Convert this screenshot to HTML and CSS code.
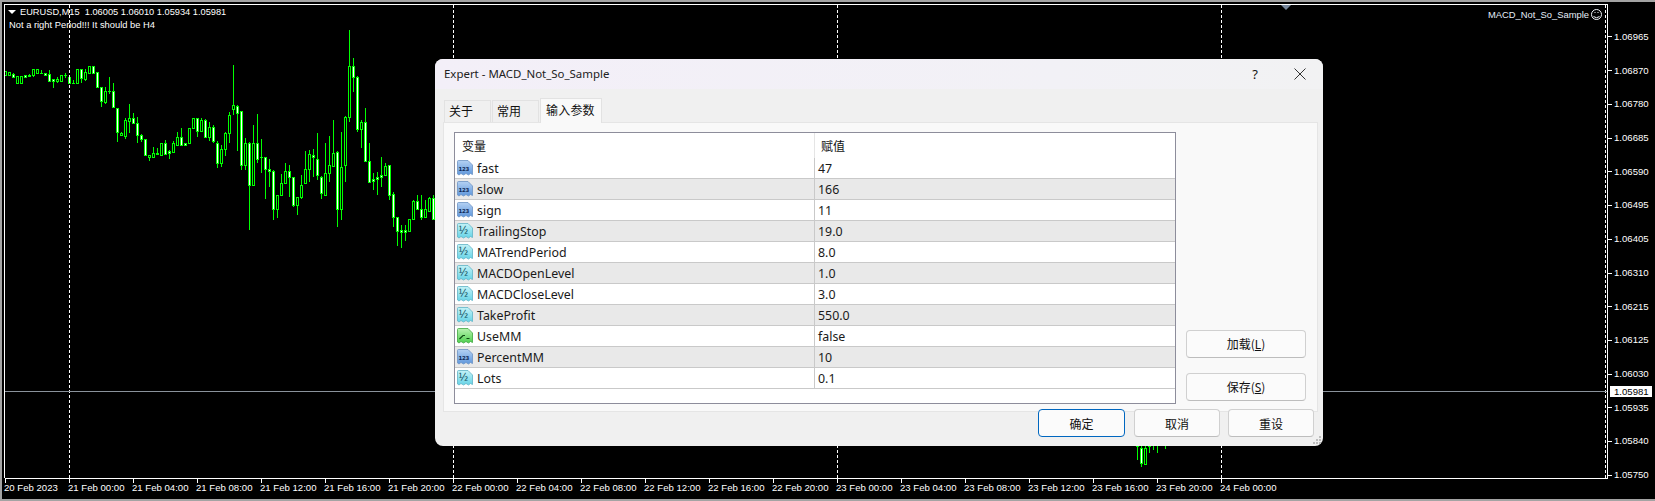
FILE: index.html
```html
<!DOCTYPE html>
<html lang="zh">
<head>
<meta charset="utf-8">
<title>MetaTrader Expert</title>
<link rel="stylesheet" href="styles.css">
</head>
<body>
<div class="screen">
  <svg class="canvas" width="1655" height="501" viewBox="0 0 1655 501">
    <g id="candles"></g>
    <path class="dash" d="M69.5 5V478M453.5 5V478M837.5 5V478M1221.5 5V478M1605.5 5V478"/>
    <path class="price-line" d="M5 391.5H1607"/>
    <path class="frame" d="M4.5 478V4.5H1607.5V478.5H4.5"/>
    <path class="frame" d="M5.5 479V483M69.5 479V483M133.5 479V483M197.5 479V483M261.5 479V483M325.5 479V483M389.5 479V483M453.5 479V483M517.5 479V483M581.5 479V483M645.5 479V483M709.5 479V483M773.5 479V483M837.5 479V483M901.5 479V483M965.5 479V483M1029.5 479V483M1093.5 479V483M1157.5 479V483M1221.5 479V483"/>
    <path class="frame" d="M1608 36.5H1612M1608 70.5H1612M1608 104.5H1612M1608 138.5H1612M1608 171.5H1612M1608 205.5H1612M1608 239.5H1612M1608 273.5H1612M1608 306.5H1612M1608 340.5H1612M1608 374.5H1612M1608 407.5H1612M1608 441.5H1612M1608 475.5H1612"/>
    <path class="marker" d="M1281 5H1291L1286 10Z"/>
    <circle class="smile" cx="1596.5" cy="14.5" r="5"/>
    <path class="smile" d="M1593.5 16.5Q1596.5 19 1599.5 16.5M1594.5 12.5H1595.5M1597.5 12.5H1598.5"/>
    <path class="menu-arrow" d="M8 10H16L12 14Z"/>
  </svg>

  <div class="chart-head">
    <div class="head-line">EURUSD,M15&nbsp; 1.06005 1.06010 1.05934 1.05981</div>
    <div class="head-note">Not a right Period!!! It should be H4</div>
  </div>
  <div class="ea-name">MACD_Not_So_Sample</div>

  <div class="price-axis">
    <span>1.06965</span><span>1.06870</span><span>1.06780</span><span>1.06685</span><span>1.06590</span><span>1.06495</span><span>1.06405</span><span>1.06310</span><span>1.06215</span><span>1.06125</span><span>1.06030</span><span>1.05935</span><span>1.05840</span><span>1.05750</span>
  </div>
  <div class="price-tag">1.05981</div>

  <div class="time-axis">
    <span>20 Feb 2023</span><span>21 Feb 00:00</span><span>21 Feb 04:00</span><span>21 Feb 08:00</span><span>21 Feb 12:00</span><span>21 Feb 16:00</span><span>21 Feb 20:00</span><span>22 Feb 00:00</span><span>22 Feb 04:00</span><span>22 Feb 08:00</span><span>22 Feb 12:00</span><span>22 Feb 16:00</span><span>22 Feb 20:00</span><span>23 Feb 00:00</span><span>23 Feb 04:00</span><span>23 Feb 08:00</span><span>23 Feb 12:00</span><span>23 Feb 16:00</span><span>23 Feb 20:00</span><span>24 Feb 00:00</span>
  </div>

  <svg class="defs" width="0" height="0">
    <defs>
      <linearGradient id="g-blue" x1="0" y1="0" x2="0" y2="1"><stop offset="0" stop-color="#b4d1f3"/><stop offset="1" stop-color="#5f97dc"/></linearGradient>
      <linearGradient id="g-teal" x1="0" y1="0" x2="0" y2="1"><stop offset="0" stop-color="#c4f2f7"/><stop offset="1" stop-color="#66d3e6"/></linearGradient>
      <linearGradient id="g-green" x1="0" y1="0" x2="0" y2="1"><stop offset="0" stop-color="#b8f3b0"/><stop offset="1" stop-color="#4fcf4f"/></linearGradient>
      <symbol id="i-int" viewBox="0 0 16 16">
        <path class="doc doc-int" d="M.5 1.5Q.5.5 1.5.5H11L15.5 5V14.5L13.5 13.5 11.5 15 9 13.5 6.5 15 4 13.5 2 15 .5 14Z"/>
        <text class="glyph glyph-int" x="1.5" y="10.5">123</text>
      </symbol>
      <symbol id="i-dbl" viewBox="0 0 16 16">
        <path class="doc doc-dbl" d="M.5 1.5Q.5.5 1.5.5H11L15.5 5V14.5L13.5 13.5 11.5 15 9 13.5 6.5 15 4 13.5 2 15 .5 14Z"/>
        <text class="glyph glyph-dbl" x="1.5" y="10.5">½</text>
      </symbol>
      <symbol id="i-bool" viewBox="0 0 16 16">
        <path class="doc doc-bool" d="M.5 1.5Q.5.5 1.5.5H11L15.5 5V14.5L13.5 13.5 11.5 15 9 13.5 6.5 15 4 13.5 2 15 .5 14Z"/>
        <path class="bool-mark" d="M2.5 11L6 7.5H8M9.5 10.5H12.5"/>
      </symbol>
    </defs>
  </svg>

  <section class="dialog">
    <header class="titlebar">
      <span class="title">Expert - MACD_Not_So_Sample</span>
      <span class="help">?</span>
      <svg class="close" width="12" height="12" viewBox="0 0 12 12"><path d="M.5.5L11.5 11.5M11.5.5L.5 11.5"/></svg>
    </header>
    <nav class="tabs">
      <span class="tab">关于</span>
      <span class="tab">常用</span>
      <span class="tab tab-active">输入参数</span>
    </nav>
    <div class="panel">
      <div class="table">
        <div class="thead"><span class="th th-name">变量</span><span class="th th-value">赋值</span></div>
        <div class="row"><span class="name"><svg class="icon"><use href="#i-int"/></svg><span class="label">fast</span></span><span class="value">47</span></div>
        <div class="row alt"><span class="name"><svg class="icon"><use href="#i-int"/></svg><span class="label">slow</span></span><span class="value">166</span></div>
        <div class="row"><span class="name"><svg class="icon"><use href="#i-int"/></svg><span class="label">sign</span></span><span class="value">11</span></div>
        <div class="row alt"><span class="name"><svg class="icon"><use href="#i-dbl"/></svg><span class="label">TrailingStop</span></span><span class="value">19.0</span></div>
        <div class="row"><span class="name"><svg class="icon"><use href="#i-dbl"/></svg><span class="label">MATrendPeriod</span></span><span class="value">8.0</span></div>
        <div class="row alt"><span class="name"><svg class="icon"><use href="#i-dbl"/></svg><span class="label">MACDOpenLevel</span></span><span class="value">1.0</span></div>
        <div class="row"><span class="name"><svg class="icon"><use href="#i-dbl"/></svg><span class="label">MACDCloseLevel</span></span><span class="value">3.0</span></div>
        <div class="row alt"><span class="name"><svg class="icon"><use href="#i-dbl"/></svg><span class="label">TakeProfit</span></span><span class="value">550.0</span></div>
        <div class="row"><span class="name"><svg class="icon"><use href="#i-bool"/></svg><span class="label">UseMM</span></span><span class="value">false</span></div>
        <div class="row alt"><span class="name"><svg class="icon"><use href="#i-int"/></svg><span class="label">PercentMM</span></span><span class="value">10</span></div>
        <div class="row"><span class="name"><svg class="icon"><use href="#i-dbl"/></svg><span class="label">Lots</span></span><span class="value">0.1</span></div>
      </div>
      <div class="side">
        <button class="btn btn-side">加载(<u>L</u>)</button>
        <button class="btn btn-side">保存(<u>S</u>)</button>
      </div>
    </div>
    <footer class="footer">
      <button class="btn btn-foot btn-primary">确定</button>
      <button class="btn btn-foot">取消</button>
      <button class="btn btn-foot">重设</button>
    </footer>
    <svg class="grip" width="10" height="10" viewBox="0 0 10 10"><path d="M7 1h2v2h-2zM4 4h2v2h-2zM7 4h2v2h-2zM1 7h2v2h-2zM4 7h2v2h-2zM7 7h2v2h-2z"/></svg>
  </section>
</div>
<script src="chart.js"></script>
</body>
</html>
```

FILE: styles.css
```css
* { box-sizing: border-box; }
html, body { margin: 0; padding: 0; background: #000; }
.screen {
  position: relative;
  width: 1655px;
  height: 501px;
  overflow: hidden;
  background: #000;
  border-top: 2px solid #a3a3a3;
  border-left: 2px solid #a3a3a3;
  border-bottom: 2px solid #a3a3a3;
  font-family: "Liberation Sans", sans-serif;
  font-size: 9.6px;
  color: #fff;
}
.canvas { position: absolute; left: -2px; top: -2px; }
.canvas path, .canvas circle { fill: none; shape-rendering: crispEdges; }
.dash { stroke: #fff; stroke-dasharray: 3 2; }
.price-line { stroke: #8a929b; }
.frame { stroke: #fff; }
.canvas .marker { fill: #76879c; stroke: none; shape-rendering: auto; }
.canvas .menu-arrow { fill: #fff; shape-rendering: auto; }
.canvas .smile { stroke: #f2f6fb; shape-rendering: auto; }

.chart-head { position: absolute; left: 18px; top: 4px; line-height: 13px; white-space: nowrap; }
.head-line { font-size: 9.25px; }
.head-note { margin-left: -11px; font-size: 9.35px; }
.ea-name { position: absolute; left: 1486px; top: 6px; line-height: 13px; color: #e6eef8; font-size: 9.4px; }

.price-axis {
  position: absolute;
  left: 1612px;
  top: 28px;
  display: flex;
  flex-direction: column;
}
.price-axis span { height: 33.7px; line-height: 13px; }
.price-tag {
  position: absolute;
  left: 1608px;
  top: 384px;
  width: 42px;
  height: 11px;
  line-height: 11px;
  padding-left: 4px;
  background: #fff;
  color: #000;
}
.time-axis {
  position: absolute;
  left: 2px;
  top: 479px;
  display: flex;
  white-space: nowrap;
}
.time-axis span { flex: 0 0 64px; line-height: 13px; }

.defs { position: absolute; }
.doc { stroke-width: .8; }
.doc-int { fill: url(#g-blue); stroke: #6c93c4; }
.doc-dbl { fill: url(#g-teal); stroke: #5fb4c6; }
.doc-bool { fill: url(#g-green); stroke: #3fa63f; }
.glyph { font-family: "DejaVu Sans", sans-serif; font-weight: 700; }
.glyph-int { font-size: 5.4px; fill: #0e2a58; letter-spacing: -.2px; }
.glyph-dbl { font-size: 10px; font-weight: 400; fill: #0c4a5a; }
.bool-mark { fill: none; stroke: #0d4a12; stroke-width: 1.2; }

.dialog {
  position: absolute;
  left: 433px;
  top: 57px;
  width: 888px;
  height: 387px;
  display: flex;
  flex-direction: column;
  background: #f0f0f0;
  border-radius: 8px;
  color: #111;
  font-family: "Noto Sans", "Noto Sans CJK SC", sans-serif;
  font-size: 12.4px;
}
.titlebar {
  flex: 0 0 30px;
  display: flex;
  align-items: center;
  padding: 0 17px 1px 9px;
  background: linear-gradient(90deg, #f3eff8, #f2f1f6 70%, #f2f2f3);
  border-radius: 8px 8px 0 0;
}
.title { flex: 1; font-size: 11.45px; color: #222; }
.help { margin-right: 36px; font-size: 13px; }
.close { display: block; }
.close path { fill: none; stroke: #333; stroke-width: 1; }
.tabs {
  display: flex;
  margin-top: 9px;
  padding-left: 9px;
  height: 24px;
  font-family: "Noto Sans CJK SC", sans-serif;
  font-size: 12px;
  position: relative;
  z-index: 1;
}
.tab {
  width: 47px;
  height: 22px;
  margin-top: 2px;
  line-height: 20px;
  padding-left: 4px;
  background: #f0f0f0;
  border: 1px solid #e2e2e2;
  border-bottom: 0;
}
.tab + .tab { border-left-width: 1px; margin-left: 1px; }
.tab-active {
  width: 62px;
  height: 25px;
  margin-top: 0;
  line-height: 22px;
  padding-left: 5px;
  letter-spacing: .2px;
  background: #f9f9f9;
}
.panel {
  display: flex;
  gap: 10px;
  margin: 0 5px 0 8px;
  height: 290px;
  padding: 9px 0 0 10px;
  background: #f9f9f9;
  border: 1px solid #e5e5e5;
}
.table {
  flex: 0 0 722px;
  height: 272px;
  background: #fff;
  border: 1px solid #8d8d9b;
}
.thead {
  display: flex;
  height: 25px;
  font-family: "Noto Sans CJK SC", sans-serif;
  font-size: 12px;
  line-height: 25px;
}
.th-name { width: 360px; padding-left: 7px; border-right: 1px solid #e5e5e5; }
.th-value { padding-left: 6px; }
.row {
  display: flex;
  height: 21px;
  line-height: 22px;
  border-bottom: 1px solid #c9c9c9;
}
.alt { background: #e9e9e9; }
.name {
  width: 360px;
  display: flex;
  align-items: center;
  gap: 4px;
  padding-left: 2px;
  border-right: 1px solid #c9c9c9;
  color: #1a1a1a;
}
.label { display: block; margin-top: 2px; }
.value { padding-left: 3px; color: #1a1a1a; }
.icon { width: 16px; height: 16px; flex: none; }
.side {
  flex: 0 0 120px;
  display: flex;
  flex-direction: column;
  justify-content: flex-end;
  gap: 15px;
  height: 269px;
}
.btn {
  font-family: "Noto Sans CJK SC", sans-serif;
  font-size: 12px;
  color: #111;
  padding: 0;
  background: #fbfbfb;
  border: 1px solid #d0d0d0;
  border-bottom-color: #bdbdbd;
  border-radius: 4px;
}
.btn u { font-family: "Noto Sans", sans-serif; }
.btn-side { height: 28px; }
.footer {
  display: flex;
  justify-content: flex-end;
  gap: 8px;
  margin-top: -3px;
  padding-right: 9px;
  position: relative;
}
.btn-foot { width: 86px; height: 28px; }
.btn-primary { width: 87px; margin-right: 1px; border: 1px solid #0067c0; }
.grip { position: absolute; right: 1px; bottom: 1px; }
.grip path { fill: #bdbdbd; }
```

FILE: chart.js
```js
// Candles in 3x-zoom reference units: [x, wickTop, bodyTop, bodyBottom, wickBottom, whiteBody]
var data = [
[16,212,214,226,228,0],[28,216,216,226,228,0],[40,220,222,230,234,1],[52,228,228,250,250,0],[64,228,228,250,250,0],
[76,224,225,232,234,1],[88,222,224,228,232,1],[100,208,208,224,232,0],[112,208,208,220,220,0],[124,210,218,218,222,1],
[136,218,218,224,224,1],[148,210,222,242,242,1],[160,237,237,242,264,1],[172,230,237,242,250,0],[184,224,224,242,242,0],
[196,218,224,226,234,1],[208,228,230,248,250,1],[220,240,248,248,252,1],[232,208,208,250,250,0],[244,208,208,234,250,1],
[256,208,216,236,242,0],[268,198,198,218,220,0],[280,198,198,218,220,1],[292,216,216,262,264,1],[304,262,262,304,320,1],
[316,262,274,306,312,0],[328,232,274,274,282,1],[340,248,274,320,320,1],[352,325,325,395,425,1],[364,396,398,406,408,0],
[376,354,360,408,416,0],[388,312,355,362,400,0],[400,340,354,370,372,1],[412,352,368,404,430,1],[424,402,404,418,425,1],
[436,418,418,466,468,1],[448,464,466,470,482,0],[460,440,460,472,474,0],[472,445,458,462,466,1],[484,430,430,465,466,0],
[496,420,430,462,464,1],[508,450,454,458,476,1],[520,422,430,456,458,0],[532,395,412,436,438,0],[544,385,412,436,438,1],
[556,428,430,436,438,1],[568,385,385,430,432,0],[580,355,355,385,388,0],[592,355,355,394,410,1],[604,355,360,392,395,0],
[616,358,360,412,414,1],[628,365,382,410,424,0],[640,375,382,424,430,1],[652,424,428,488,504,1],[664,434,448,490,500,0],
[676,396,400,448,468,0],[688,336,346,400,430,0],[700,195,316,326,345,0],[712,316,318,338,452,1],[724,332,334,496,510,1],
[736,415,428,496,510,0],[748,426,428,556,690,1],[760,375,428,554,556,0],[772,342,428,476,490,1],[784,418,470,472,520,1],
[796,470,472,506,596,1],[808,476,508,512,560,1],[820,510,512,626,660,1],[832,584,586,626,655,0],[844,522,550,586,588,0],
[856,490,514,550,552,0],[868,495,512,532,590,1],[880,530,532,614,622,1],[892,590,592,614,645,0],[904,525,554,592,596,0],
[916,452,506,550,552,0],[928,450,462,506,545,0],[940,448,464,472,530,1],[952,400,476,526,540,1],[964,528,530,580,596,1],
[976,430,520,584,586,0],[988,408,496,520,546,0],[1000,360,460,498,500,0],[1012,453,455,626,680,1],[1024,396,502,626,660,0],
[1036,348,350,496,545,0],[1048,90,198,350,365,0],[1060,175,198,230,275,1],[1072,228,230,386,396,1],[1084,360,365,386,445,0],
[1096,325,365,482,484,1],[1108,430,482,546,548,1],[1120,520,538,544,570,1],[1132,515,532,538,585,1],[1144,472,526,532,560,1],
[1156,490,498,524,526,0],[1168,494,496,584,600,1],[1180,575,582,652,680,1],[1192,650,652,694,738,1],[1204,675,690,696,745,1],
[1216,675,690,696,722,1],[1228,656,658,694,696,0],[1240,600,604,658,660,0],[1252,585,604,628,630,1],[1264,585,628,650,660,1],
[1276,600,628,650,652,0],[1288,592,595,632,634,0],[1300,585,594,658,660,1],
// visible below the dialog
[3411,1320,1320,1338,1380,0],[3423,1320,1344,1389,1401,1],[3435,1320,1344,1392,1395,0],[3447,1320,1320,1338,1359,0],
[3459,1320,1320,1325,1350,1],[3471,1320,1320,1325,1359,1],[3495,1320,1320,1325,1347,1]
];
var NS = 'http://www.w3.org/2000/svg';
var host = document.getElementById('candles');
function rect(x, y, w, h, fill) {
  var r = document.createElementNS(NS, 'rect');
  r.setAttribute('x', x); r.setAttribute('y', y);
  r.setAttribute('width', w); r.setAttribute('height', Math.max(h, 1));
  r.setAttribute('fill', fill);
  r.setAttribute('shape-rendering', 'crispEdges');
  host.appendChild(r);
}
data.forEach(function (c) {
  var x = Math.floor(c[0] / 3);
  var wt = Math.round(c[1] / 3), bt = Math.round(c[2] / 3), bb = Math.round(c[3] / 3), wb = Math.round(c[4] / 3);
  rect(x, wt, 1, wb - wt, '#00ff00');
  rect(x - 1, bt, 3, bb - bt + 1, '#00ff00');
  if (bb - bt > 1) rect(x, bt + 1, 1, bb - bt - 1, c[5] ? '#ffffff' : '#000000');
});
```
